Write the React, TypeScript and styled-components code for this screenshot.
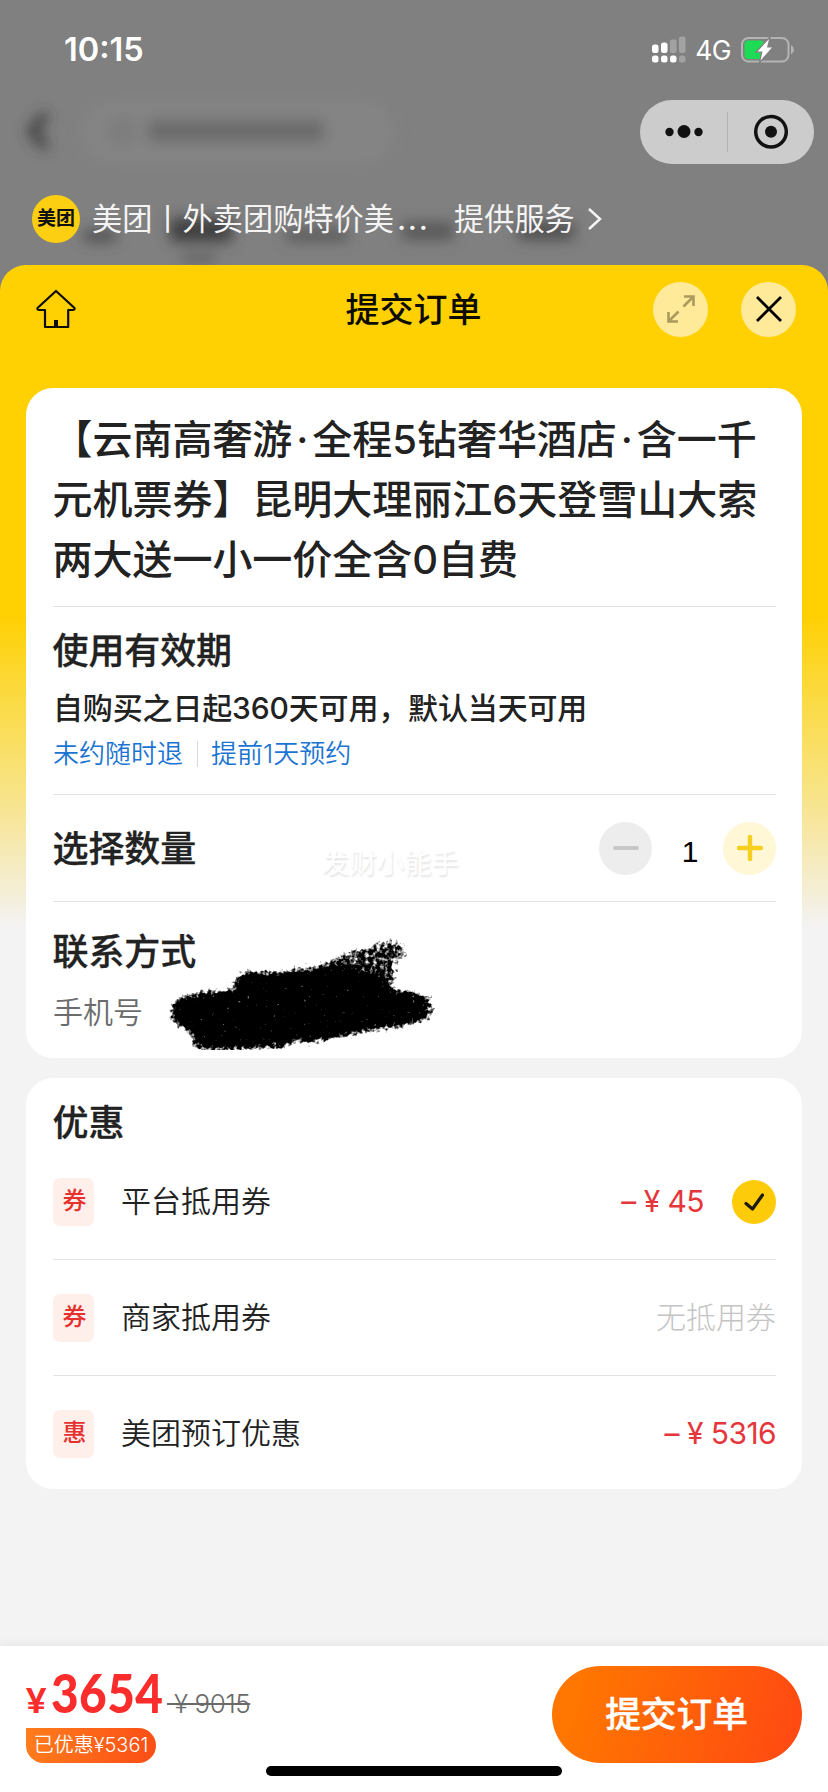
import React from 'react';
import styled, { createGlobalStyle } from 'styled-components';

const sans = `Inter, "Noto Sans CJK SC", sans-serif`;

const GlobalStyle = createGlobalStyle`
  * { box-sizing: border-box; }
  body { margin: 0; background: #808080; font-family: ${sans}; color: #222; }
  button { border: 0; padding: 0; margin: 0; font: inherit; color: inherit; background: none; }
`;

const Page = styled.main`
  position: relative;
  width: 828px;
  height: 1792px;
  display: flex;
  flex-direction: column;
  overflow: hidden;
  background: #808080;
`;

const Backdrop = styled.svg`
  position: absolute;
  left: 0;
  top: 0;
`;

const TopArea = styled.div`
  position: relative;
  height: 265px;
  flex: none;
  display: flex;
  flex-direction: column;
`;

const StatusBar = styled.div`
  height: 100px;
  padding: 0 33px 0 64px;
  display: flex;
  justify-content: space-between;
  align-items: center;
  color: #fff;
`;

const Clock = styled.span`
  font-size: 32.5px;
  font-weight: 600;
  line-height: 40px;
`;

const StatusIcons = styled.div`
  display: flex;
  align-items: center;
`;

const Network = styled.span`
  margin: 0 10px 0 9px;
  font-size: 26.5px;
  line-height: 32px;
  letter-spacing: -0.6px;
`;

const CapsuleRow = styled.div`
  display: flex;
  justify-content: flex-end;
  padding-right: 14px;
`;

const Capsule = styled.div`
  width: 174px;
  height: 64px;
  border-radius: 32px;
  background: #cccccc;
`;

const Provider = styled.div`
  margin-top: 31px;
  padding-left: 32px;
  display: flex;
  align-items: center;
  color: #f4f4f4;
  font-size: 30.2px;
  line-height: 48px;
`;

const Logo = styled.span`
  width: 48px;
  height: 48px;
  margin-right: 12px;
  border-radius: 50%;
  background: #fdcf12;
  color: #111;
  font-size: 19px;
  font-weight: 700;
  text-align: center;
`;

const ProviderName = styled.span`
  width: 362px;
`;

const Dots = styled.span`
  margin-left: 3px;
  letter-spacing: 1.8px;
  font-weight: 500;
`;

const Sheet = styled.section`
  position: relative;
  flex: 1;
  display: flex;
  flex-direction: column;
  border-radius: 26px 26px 0 0;
  overflow: hidden;
  background: linear-gradient(#ffd002 0, #ffd002 350px, #fbda40 430px, #f8e48c 535px, #f4efdc 635px, #f3f3f3 662px);
`;

const Header = styled.header`
  height: 88px;
  padding: 0 32px 0 36px;
  display: grid;
  grid-template-columns: 1fr auto 1fr;
  align-items: center;
  color: #0c0c00;
`;

const SheetTitle = styled.h1`
  margin: 2px 5px 0 0;
  font-size: 34px;
  font-weight: 500;
  line-height: 44px;
`;

const HeaderActions = styled.div`
  display: flex;
  justify-content: flex-end;
  gap: 33px;
`;

const RoundButton = styled.button`
  width: 55px;
  height: 55px;
  border-radius: 50%;
  background: #ffea99;
  display: grid;
  place-items: center;
`;

const Content = styled.div`
  flex: 1;
  padding: 35px 26px 0;
  display: flex;
  flex-direction: column;
  gap: 20px;
`;

const Card = styled.article`
  position: relative;
  padding: 0 26px 0 27px;
  border-radius: 27px;
  background: #fff;
`;

const Section = styled.section<{ $pad: string; $last?: boolean }>`
  position: relative;
  padding: ${(p) => p.$pad};
  border-bottom: ${(p) => (p.$last ? '0' : '1px solid #e3e3e3')};
`;

const ProductTitle = styled.h2`
  margin: 0 0 0 -0.5px;
  font-size: 40px;
  font-weight: 500;
  line-height: 60px;
  letter-spacing: -0.03px;
  white-space: nowrap;
`;

const MiddleDot = styled.span`
  display: inline-block;
  width: 20px;
  text-align: center;
`;

const Heading = styled.h3<{ $line?: number }>`
  margin: 0 0 0 -0.5px;
  padding-top: 2px;
  font-size: 36px;
  font-weight: 500;
  line-height: ${(p) => (p.$line ?? 50) - 2}px;
  letter-spacing: -0.1px;
  -webkit-text-stroke: 0.3px;
`;

const Validity = styled.p`
  margin: 11px 0 6px;
  font-size: 30px;
  font-weight: 500;
  line-height: 44px;
  letter-spacing: -0.15px;
`;

const Policies = styled.div`
  display: flex;
  align-items: center;
  font-size: 26px;
  line-height: 36px;
  font-weight: 350;
  color: #1b74d2;
`;

const PolicyDivider = styled.i`
  width: 1px;
  height: 26px;
  margin: 0 13px 0 14px;
  background: #d9d9d9;
`;

const QuantityRow = styled.div`
  height: 106px;
  display: flex;
  align-items: center;
  justify-content: space-between;
`;

const Stepper = styled.div`
  display: flex;
  align-items: center;
`;

const StepButton = styled.button<{ $tone: string }>`
  width: 53px;
  height: 53px;
  border-radius: 50%;
  background: ${(p) => p.$tone};
  display: grid;
  place-items: center;
`;

const Quantity = styled.span`
  width: 71px;
  padding: 8px 0 0 5px;
  text-align: center;
  font-family: "Liberation Sans", Arial, sans-serif;
  font-size: 30px;
  line-height: 36px;
  color: #000;
`;

const Watermark = styled.span`
  position: absolute;
  left: 296px;
  top: 456px;
  font-size: 27.4px;
  line-height: 38px;
  color: #fff;
  text-shadow: 1px 2px 2px rgba(0, 0, 0, 0.11);
`;

const PhoneLabel = styled.div`
  margin-top: 14px;
  font-size: 30px;
  line-height: 44px;
  font-weight: 350;
  color: #6c6c6c;
`;

const Scribble = styled.svg`
  position: absolute;
  left: 97px;
  top: 18px;
`;

const DiscountRow = styled.div<{ $last?: boolean }>`
  height: ${(p) => (p.$last ? 113 : 116)}px;
  padding-top: ${(p) => (p.$last ? 3 : 0)}px;
  border-bottom: ${(p) => (p.$last ? '0' : '1px solid #e3e3e3')};
  display: flex;
  align-items: center;
  font-size: 30px;
  line-height: 44px;
`;

const Tag = styled.span`
  width: 41px;
  height: 48px;
  margin-right: 27px;
  padding-left: 2px;
  border-radius: 7px;
  background: #ffefeb;
  color: #e6312e;
  font-size: 24px;
  font-weight: 500;
  line-height: 45px;
  text-align: center;
`;

const DiscountName = styled.span`
  flex: 1;
  padding-bottom: 2px;
  font-weight: 350;
`;

const Amount = styled.span<{ $muted?: boolean }>`
  display: flex;
  gap: 8px;
  padding-bottom: 2px;
  font-weight: ${(p) => (p.$muted ? 300 : 400)};
  letter-spacing: ${(p) => (p.$muted ? 0 : -0.6)}px;
  color: ${(p) => (p.$muted ? '#c4c4c4' : '#e5373b')};
`;

const Checked = styled.span`
  width: 44px;
  height: 44px;
  margin-left: 28px;
  border-radius: 50%;
  background: #fdcb0a;
  display: grid;
  place-items: center;
`;

const Footer = styled.footer`
  position: relative;
  height: 146px;
  padding: 20px 26px 0;
  background: #fff;
  box-shadow: 0 -1px 10px rgba(0, 0, 0, 0.07);
  display: flex;
  justify-content: space-between;
`;

const Prices = styled.div`
  display: flex;
  flex-direction: column;
  align-items: flex-start;
`;

const PriceLine = styled.div`
  height: 62px;
  display: flex;
  align-items: baseline;
  line-height: 54px;
`;

const Currency = styled.span`
  width: 25px;
  font-family: Lato, sans-serif;
  font-weight: 900;
  font-size: 35px;
  color: #fb2c2c;
`;

const Price = styled.span`
  width: 116px;
  font-family: Lato, sans-serif;
  font-weight: 900;
  font-size: 53px;
  transform: scaleX(0.9);
  transform-origin: left;
  letter-spacing: 0.5px;
  color: #fb2c2c;
`;

const OriginalPrice = styled.s`
  font-size: 26px;
  font-weight: 350;
  letter-spacing: -0.4px;
  color: #6a6a6a;
  white-space: pre;
`;

const Saved = styled.span`
  width: 130px;
  height: 35px;
  border-radius: 0 18px 18px 18px;
  background: linear-gradient(100deg, #ff7d1c, #fb4d16);
  color: #fff;
  font-size: 20px;
  font-weight: 350;
  line-height: 34px;
  text-align: center;
`;

const SubmitButton = styled.button`
  width: 250px;
  height: 97px;
  border-radius: 49px;
  background: linear-gradient(105deg, #ff7700 10%, #ff4a12 95%);
  color: #fff;
  font-size: 35.7px;
  font-weight: 500;
  line-height: 92px;
  padding: 0 1px 2px 0;
  -webkit-text-stroke: 0.4px;
`;

const HomeIndicator = styled.i`
  position: absolute;
  left: 266px;
  bottom: 16px;
  width: 296px;
  height: 10px;
  border-radius: 5px;
  background: #000;
`;

const BlurredPage = () => (
  <Backdrop width="828" height="300">
    <defs>
      <filter id="soft" x="-50%" y="-100%" width="200%" height="300%">
        <feGaussianBlur stdDeviation="7" />
      </filter>
    </defs>
    <g filter="url(#soft)">
      <rect x="82" y="100" width="312" height="64" rx="32" fill="#848484" />
      <path d="M46 114 L32 131 L46 148" fill="none" stroke="#3a3a3a" strokeWidth="9" />
      <circle cx="122" cy="131" r="10" fill="none" stroke="#6e6e6e" strokeWidth="4" />
      <rect x="148" y="120" width="176" height="22" fill="#6a6a6a" />
      <rect x="84" y="230" width="32" height="12" fill="#505050" />
      <rect x="170" y="218" width="62" height="24" fill="#404040" />
      <rect x="182" y="253" width="34" height="10" fill="#626262" />
      <rect x="286" y="229" width="62" height="12" fill="#585858" />
      <rect x="402" y="222" width="52" height="18" fill="#585858" />
      <rect x="518" y="222" width="56" height="18" fill="#505050" />
    </g>
  </Backdrop>
);

const SignalIcon = () => (
  <svg width="34" height="28" viewBox="0 0 34 28" fill="#fff">
    <rect x="0" y="8.500" width="6.500" height="8.500" rx="2.500" />
    <rect x="9" y="6.500" width="6.500" height="10.500" rx="2.500" />
    <rect x="18" y="3.500" width="6.500" height="13.500" rx="2" fill="#a2a2a2" />
    <rect x="27" y="0.500" width="6.500" height="16.500" rx="2" fill="#a2a2a2" />
    <rect x="0" y="19.500" width="6.500" height="7" rx="2.500" />
    <rect x="9" y="19.500" width="6.500" height="7" rx="2.500" />
    <rect x="18" y="19.500" width="6.500" height="7" rx="2.500" />
    <rect x="27" y="19.500" width="6.500" height="7" rx="2.500" fill="#a2a2a2" />
  </svg>
);

const BatteryIcon = () => (
  <svg width="54" height="28" viewBox="0 0 54 28">
    <rect x="1" y="2" width="46.500" height="23.500" rx="6.500" fill="none" stroke="#b4b4b4" strokeWidth="2" />
    <path d="M50 9 Q53 11 53 13.700 Q53 16.500 50 18.500 Z" fill="#b4b4b4" />
    <rect x="3.500" y="4.500" width="19.500" height="18.500" rx="4" fill="#1edb55" />
    <path d="M28 3 L16.500 15.500 H21.500 L19.500 24.500 L31 11.500 H26 Z" fill="#fff" stroke="#808080" strokeWidth="2.600" paintOrder="stroke" />
  </svg>
);

const CapsuleIcons = () => (
  <svg width="174" height="64" viewBox="0 0 174 64" fill="#111">
    <circle cx="29.500" cy="32" r="4.200" />
    <circle cx="44" cy="31.500" r="6.500" />
    <circle cx="58.500" cy="32" r="4.200" />
    <path d="M87.500 12 V52" stroke="#b2b2b2" />
    <circle cx="131" cy="31.700" r="15.300" fill="none" stroke="#111" strokeWidth="3.500" />
    <circle cx="131" cy="31.700" r="6" />
  </svg>
);

const HomeIcon = () => (
  <svg width="40" height="40" viewBox="0 0 40 40" fill="none" stroke="#0c0c00" strokeWidth="2.200" strokeLinejoin="round">
    <path d="M20 2 L38.500 19 Q39 21 36.500 21 H32.200 V38 H9 V21 H3.500 Q1 21 1.500 19 Z" />
    <path d="M20 38 V31" strokeWidth="4" />
  </svg>
);

const ScribbleOut = () => (
  <Scribble width="320" height="130" viewBox="150 920 320 130">
    <defs>
      <filter id="chalk" x="-10%" y="-20%" width="120%" height="140%">
        <feTurbulence type="fractalNoise" baseFrequency="0.26" numOctaves="2" seed="4" result="noise" />
        <feGaussianBlur in="SourceGraphic" stdDeviation="3.600" result="shape" />
        <feComposite in="shape" in2="noise" operator="arithmetic" k1="0" k2="1.550" k3="1.600" k4="-1.450" />
        <feColorMatrix values="0 0 0 0 0  0 0 0 0 0  0 0 0 0 0  0 0 0 1.900 0" />
      </filter>
    </defs>
    <g filter="url(#chalk)">
      <path
        transform="translate(0 890) scale(.33333)"
        d="M510 355 L536 320 600 306 700 296 708 265 726 243 840 244 900 235 960 230 1040 232 1150 265 1175 298 1240 302 1276 325 1280 370 1254 399 1190 414 1130 420 1080 432 1000 446 915 464 895 450 850 474 750 478 655 484 582 476 572 430 520 400Z"
      />
      <path
        opacity="0.720"
        transform="translate(0 890) scale(.33333)"
        d="M930 244 L1000 201 1060 178 1120 162 1182 146 1216 168 1218 210 1184 214 1190 270 1165 306Z M1260 308 L1300 325 1302 380 1250 406Z"
      />
    </g>
  </Scribble>
);

const discounts = [
  { tag: '券', name: '平台抵用券', value: '45', checked: true },
  { tag: '券', name: '商家抵用券' },
  { tag: '惠', name: '美团预订优惠', value: '5316' },
];

export default function App() {
  return (
    <>
      <GlobalStyle />
      <Page>
        <BlurredPage />
        <TopArea>
          <StatusBar>
            <Clock>10:15</Clock>
            <StatusIcons>
              <SignalIcon />
              <Network>4G</Network>
              <BatteryIcon />
            </StatusIcons>
          </StatusBar>
          <CapsuleRow>
            <Capsule><CapsuleIcons /></Capsule>
          </CapsuleRow>
          <Provider>
            <Logo>美团</Logo>
            <ProviderName>美团丨外卖团购特价美<Dots>...</Dots></ProviderName>
            <span>提供服务</span>
            <svg width="30" height="26" viewBox="0 0 30 26" fill="none" stroke="#f4f4f4" strokeWidth="2.500">
              <path d="M14 3 L25 13 L14 23" />
            </svg>
          </Provider>
        </TopArea>

        <Sheet>
          <Header>
            <HomeIcon />
            <SheetTitle>提交订单</SheetTitle>
            <HeaderActions>
              <RoundButton>
                <svg width="28" height="28" viewBox="0 0 28 28" fill="none" stroke="#aa9a5c" strokeWidth="2.600">
                  <path d="M16.500 11.500 L26 2 M17 1.500 H26.500 V11 M11.500 16.500 L2 26 M1.500 17 V26.500 H11" />
                </svg>
              </RoundButton>
              <RoundButton>
                <svg width="26" height="26" viewBox="0 0 26 26" stroke="#000" strokeWidth="2.800">
                  <path d="M1 1 L25 25 M25 1 L1 25" />
                </svg>
              </RoundButton>
            </HeaderActions>
          </Header>

          <Content>
            <Card>
              <Section $pad="22px 0 16px">
                <ProductTitle>
                  【云南高奢游<MiddleDot>·</MiddleDot>全程5钻奢华酒店<MiddleDot>·</MiddleDot>含一千<br />
                  元机票券】昆明大理丽江6天登雪山大索<br />
                  两大送一小一价全含0自费
                </ProductTitle>
              </Section>
              <Section $pad="18px 0 22px">
                <Heading>使用有效期</Heading>
                <Validity>自购买之日起360天可用，默认当天可用</Validity>
                <Policies>
                  <span>未约随时退</span>
                  <PolicyDivider />
                  <span>提前1天预约</span>
                </Policies>
              </Section>
              <Section $pad="0">
                <QuantityRow>
                  <Heading>选择数量</Heading>
                  <Stepper>
                    <StepButton $tone="#ededed">
                      <svg width="28" height="28" stroke="#c8c8c8" strokeWidth="4" strokeLinecap="round">
                        <path d="M3 14 H25" />
                      </svg>
                    </StepButton>
                    <Quantity>1</Quantity>
                    <StepButton $tone="#fff7d6">
                      <svg width="28" height="28" stroke="#f5d020" strokeWidth="4.400" strokeLinecap="round">
                        <path d="M3 14 H25 M14 3 V25" />
                      </svg>
                    </StepButton>
                  </Stepper>
                </QuantityRow>
              </Section>
              <Section $pad="24px 0" $last>
                <Heading>联系方式</Heading>
                <PhoneLabel>手机号</PhoneLabel>
                <ScribbleOut />
              </Section>
              <Watermark>发财小能手</Watermark>
            </Card>

            <Card>
              <Section $pad="22px 0 0" $last>
                <Heading $line={44}>优惠</Heading>
                {discounts.map((d, i) => (
                  <DiscountRow key={d.name} $last={i === discounts.length - 1}>
                    <Tag>{d.tag}</Tag>
                    <DiscountName>{d.name}</DiscountName>
                    {d.value ? (
                      <Amount><span>–</span><span>¥</span><span>{d.value}</span></Amount>
                    ) : (
                      <Amount $muted>无抵用券</Amount>
                    )}
                    {d.checked && (
                      <Checked>
                        <svg width="20" height="20" viewBox="0 0 20 20" fill="none" stroke="#1c1a10" strokeWidth="3.200" strokeLinecap="round" strokeLinejoin="round">
                          <path d="M2 11.500 L8.500 17 L18.500 3" />
                        </svg>
                      </Checked>
                    )}
                  </DiscountRow>
                ))}
              </Section>
            </Card>
          </Content>

          <Footer>
            <Prices>
              <PriceLine>
                <Currency>¥</Currency>
                <Price>3654</Price>
                <OriginalPrice> ¥ 9015</OriginalPrice>
              </PriceLine>
              <Saved>已优惠¥5361</Saved>
            </Prices>
            <SubmitButton>提交订单</SubmitButton>
            <HomeIndicator />
          </Footer>
        </Sheet>
      </Page>
    </>
  );
}
